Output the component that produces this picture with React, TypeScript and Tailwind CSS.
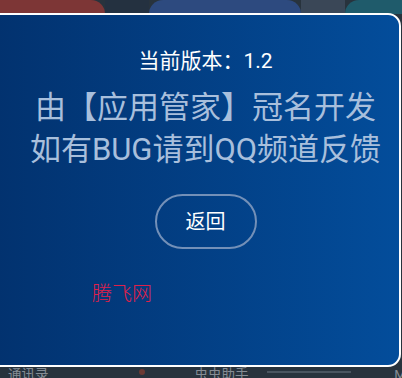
import React from 'react';

const font = { fontFamily: 'Roboto, "Noto Sans CJK SC", sans-serif' };

function BackdropTop() {
  return (
    <div className="flex h-[14px] w-full">
      <div className="w-[105px] bg-[#7d3636] rounded-tr-[14px]" />
      <div className="w-[44px] bg-[#243140]" />
      <div className="w-[152px] bg-[#2d4a7f] rounded-tl-[18px] rounded-tr-[18px]" />
      <div className="w-[44px] bg-[#3a4757]" />
      <div className="flex-1 bg-[#1f5b6b] rounded-tl-[16px]" />
    </div>
  );
}

function BackdropBottom() {
  return (
    <div className="flex h-full w-full items-start bg-[#28333d] text-[13.5px] leading-none text-[#858c94] pt-[2px]" style={font}>
      <span className="ml-[8px]">通讯录</span>
      <span className="ml-[90px] mt-[1px] h-[6px] w-[6px] rounded-full bg-[#6b3a34]" />
      <span className="ml-[50px]">虫虫助手</span>
      <span className="ml-[18px] mt-[3px] h-[2px] w-[84px] bg-[#4a5560]" />
      <span className="ml-auto mr-[-4px]">M</span>
    </div>
  );
}

export default function App() {
  return (
    <div className="relative w-[402px] h-[378px] overflow-hidden bg-[#28333d]" style={font}>
      <div className="absolute left-0 top-0 w-full h-[14px]">
        <BackdropTop />
      </div>
      <div className="absolute left-0 bottom-0 w-full h-[12px]">
        <BackdropBottom />
      </div>

      <div className="absolute left-[-4px] top-[13px] w-[405px] h-[354px] rounded-r-[13px] border-2 border-white bg-gradient-to-r from-[#02326f] to-[#034d9b]">
        <div className="flex flex-col items-center pl-[14px] pt-[32px]">
          <p className="text-[21px] leading-[28px] text-white">当前版本：1.2</p>
          <p className="mt-[12px] text-[31px] leading-[42px] text-[#a8bfdc]">由【应用管家】冠名开发</p>
          <p className="text-[31px] leading-[42px] text-[#a8bfdc]">如有BUG请到QQ频道反馈</p>
          <button className="mt-[23px] w-[102px] h-[55px] rounded-full border-2 border-[#7390b8] text-[20px] text-white">
            返回
          </button>
          <p className="self-start ml-[80px] mt-[31px] text-[20px] leading-[28px] font-light text-[#e0204a]">腾飞网</p>
        </div>
      </div>
    </div>
  );
}
